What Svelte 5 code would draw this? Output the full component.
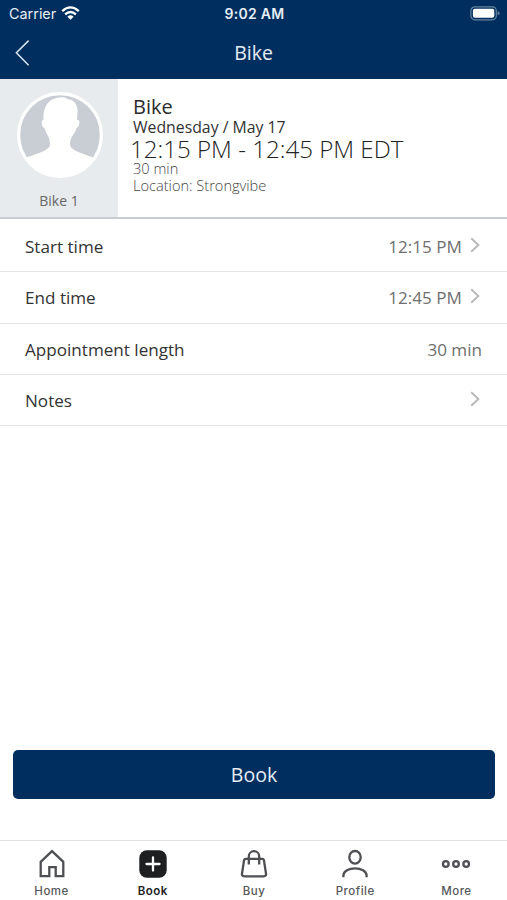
<script>
  const appointment = {
    title: "Bike",
    resource: "Bike 1",
    date: "Wednesday / May 17",
    time: "12:15 PM - 12:45 PM EDT",
    length: "30 min",
    location: "Strongvibe",
  };

  const rows = [
    { label: "Start time", value: "12:15 PM", link: true },
    { label: "End time", value: "12:45 PM", link: true },
    { label: "Appointment length", value: "30 min", link: false },
    { label: "Notes", value: "", link: true },
  ];

  const tabs = ["Home", "Book", "Buy", "Profile", "More"];
  let active = "Book";
</script>

<div class="screen">
  <header>
    <div class="status">
      <div class="carrier">
        <span>Carrier</span>
        <svg width="19" height="14" viewBox="0 0 19 14">
          <path d="M1.2 5.2Q9.5 -2.4 17.8 5.2" />
          <path d="M4.1 8.4Q9.5 3.6 14.9 8.4" />
          <path class="solid" d="M6.4 10.7Q9.5 8 12.6 10.7L9.5 13.8Z" />
        </svg>
      </div>
      <span class="clock">9:02 AM</span>
      <div class="battery">
        <svg width="30" height="15" viewBox="0 0 30 15">
          <rect class="case" x="0.9" y="0.8" width="25.4" height="13" rx="4" />
          <rect class="solid" x="2.9" y="2.8" width="21.4" height="9" rx="2" />
          <path class="tip" d="M27.6 5Q29.6 5.8 29.6 7.3T27.6 9.6Z" />
        </svg>
      </div>
    </div>
    <div class="nav">
      <button class="back" aria-label="Back">
        <svg width="15" height="28" viewBox="0 0 15 28">
          <path d="M13.6 1.6L1.4 13.8L13.6 26.2" />
        </svg>
      </button>
      <h1>{appointment.title}</h1>
      <span></span>
    </div>
  </header>

  <section class="summary">
    <div class="resource">
      <svg width="86" height="86" viewBox="0 0 86 86">
        <circle cx="43" cy="43" r="41.4" fill="#c9ced5" stroke="#fff" stroke-width="3.2" />
        <path
          fill="#fff"
          d="M43 5.5C47 4.5 50 6 51 7.5C57 7 60.500 13 60.500 19C60.500 23 60 26 60 28C64 27 62.500 35.500 59.500 36C58.500 41 53 45 53 52C53 59 66 61 77 66A41.6 41.6 0 0 1 9 66C20 61 33 59 33 52C33 45 28.5 41 27.500 36C24.5 35.500 23.500 27 26.5 28C25.5 16 31 6 43 5.5Z"
        />
      </svg>
      <span>{appointment.resource}</span>
    </div>
    <div class="details">
      <h2>{appointment.title}</h2>
      <p class="date">{appointment.date}</p>
      <p class="time">{appointment.time}</p>
      <p>{appointment.length}</p>
      <p>Location: {appointment.location}</p>
    </div>
  </section>

  <ul>
    {#each rows as row}
      <li>
        <span class="label">{row.label}</span>
        <span class="value">{row.value}</span>
        {#if row.link}
          <svg class="chevron" width="10" height="16" viewBox="0 0 10 16">
            <path d="M1.2 1.2L8.4 8L1.2 14.8" />
          </svg>
        {/if}
      </li>
    {/each}
  </ul>

  <div class="action">
    <button class="submit">Book</button>
  </div>

  <nav class="tabs">
    {#each tabs as tab}
      <button class:active={tab === active} on:click={() => (active = tab)}>
        <svg width="30" height="30" viewBox="0 0 30 30">
          {#if tab === "Home"}
            <path d="M3.7 12.8L15 2.2L26.3 12.8V27.2H18.7V18.2H12.3V27.2H3.7Z" />
          {:else if tab === "Book"}
            <rect class="fill" x="1.3" y="1.3" width="27.4" height="27.4" rx="7.5" />
            <path class="plus" d="M15 8.5V21.5M8.5 15H21.5" />
          {:else if tab === "Buy"}
            <path d="M6.6 9.8H23.4Q24.6 9.8 24.9 11L27 24.5Q27.4 27.3 24.6 27.3H5.4Q2.6 27.3 3 24.5L5.1 11Q5.4 9.8 6.6 9.8Z" />
            <path d="M9.8 15.5V7.4A5.2 5.2 0 0 1 20.2 7.4V15.5" />
          {:else if tab === "Profile"}
            <ellipse cx="15" cy="8.3" rx="5.7" ry="6.3" />
            <path d="M3.4 28.3V26.5C3.4 17 26.6 17 26.6 26.5V28.3" />
          {:else}
            <circle cx="4.8" cy="15" r="2.8" />
            <circle cx="15" cy="15" r="2.8" />
            <circle cx="25.2" cy="15" r="2.8" />
          {/if}
        </svg>
        <span>{tab}</span>
      </button>
    {/each}
  </nav>
</div>

<style>
  :global(body) {
    margin: 0;
    background: #fff;
  }

  .screen {
    height: 900px;
    display: flex;
    flex-direction: column;
    overflow: hidden;
    font-family: "Open Sans", sans-serif;
    color: #333;
  }

  svg {
    display: block;
    fill: none;
  }

  button {
    border: 0;
    padding: 0;
    background: none;
    font-family: inherit;
  }

  h1,
  h2,
  p {
    margin: 0;
  }

  header {
    height: 79px;
    flex: none;
    background: #002f5f;
    color: #fff;
  }

  .status {
    height: 27px;
    padding: 0 7px 0 9px;
    display: grid;
    grid-template-columns: 1fr auto 1fr;
    align-items: center;
    font: 14.4px/27px Inter, sans-serif;
    color: #e6edf5;
  }

  .carrier {
    display: flex;
    align-items: center;
    gap: 5px;
  }

  .carrier svg {
    margin-top: -2px;
    stroke: #fff;
    stroke-width: 2.3;
  }

  .solid {
    fill: #fff;
    stroke: none;
  }

  .clock {
    font-size: 14px;
    font-weight: 600;
    letter-spacing: 0.3px;
  }

  .battery {
    justify-self: end;
  }

  .case {
    stroke: #6683a0;
    stroke-width: 1.2;
  }

  .tip {
    fill: #6683a0;
  }

  .nav {
    height: 52px;
    padding: 0 15px;
    display: grid;
    grid-template-columns: 1fr auto 1fr;
    align-items: center;
  }

  .back svg {
    stroke: #dce6f0;
    stroke-width: 1.5;
  }

  h1 {
    font-size: 19.5px;
    font-weight: 400;
    line-height: 50px;
    color: #e6edf5;
  }

  .summary {
    height: 138px;
    flex: none;
    display: flex;
    border-bottom: 2px solid #c8cdd4;
  }

  .resource {
    width: 118px;
    padding: 13px 0 0 1px;
    box-sizing: border-box;
    display: flex;
    flex-direction: column;
    align-items: center;
    background: #e7ebee;
    font-size: 14px;
    line-height: 20px;
    color: #666;
  }

  .resource span {
    margin: 13px 1px 0 0;
  }

  .details {
    padding: 15px 0 0 15px;
    font-size: 14.6px;
    font-weight: 300;
    line-height: 17px;
    color: #444;
  }

  h2 {
    font-size: 20px;
    font-weight: 400;
    line-height: 25px;
    color: #2b2b2b;
  }

  .date {
    font-size: 15.8px;
    font-weight: 400;
    line-height: 17px;
    color: #333;
  }

  .time {
    margin-left: -3px;
    padding-top: 1px;
    font-size: 24.1px;
    line-height: 24px;
    color: #222;
  }

  .time + p {
    margin-top: -1px;
  }

  ul {
    list-style: none;
    margin: 0;
    padding: 2px 0 0;
  }

  li {
    height: 51.25px;
    padding: 1px 25px 0;
    box-sizing: border-box;
    display: flex;
    align-items: center;
    border-bottom: 1px solid #e4e4e4;
    font-size: 17.1px;
  }

  .value {
    margin-left: auto;
    color: #6f6f6f;
  }

  .chevron {
    margin: -3px 2px 0 8px;
    stroke: #b9b9b9;
    stroke-width: 1.9;
  }

  .action {
    margin-top: auto;
    padding: 0 12px 41px 13px;
  }

  .submit {
    display: block;
    width: 100%;
    height: 49px;
    border-radius: 5px;
    background: #002f5f;
    color: #e6edf5;
    font-size: 19.5px;
  }

  .tabs {
    height: 60px;
    flex: none;
    box-sizing: border-box;
    padding: 8px 0 0 1px;
    display: flex;
    border-top: 1px solid #e2e2e2;
  }

  .tabs button {
    flex: 1;
    display: flex;
    flex-direction: column;
    align-items: center;
    gap: 4px;
    font: 500 11.5px/16px Inter, sans-serif;
    letter-spacing: 0.5px;
    color: #55575a;
  }

  .tabs svg {
    stroke: #4d4f52;
    stroke-width: 2.3;
  }

  .tabs .active {
    font-weight: 600;
    color: #222;
  }

  .tabs .fill {
    fill: #1d1f21;
    stroke: none;
  }

  .tabs .plus {
    stroke: #fff;
    stroke-linecap: round;
  }
</style>
